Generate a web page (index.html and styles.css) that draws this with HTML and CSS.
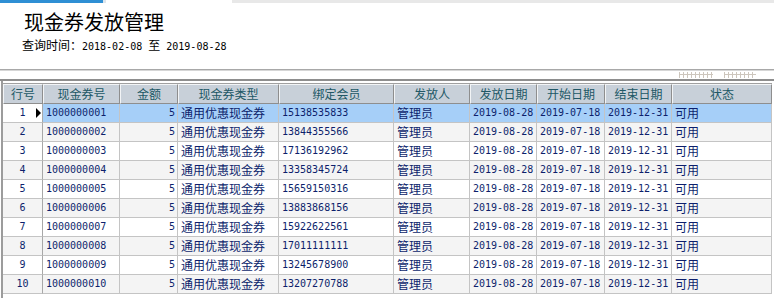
FILE: index.html
```html
<!DOCTYPE html>
<html lang="zh-CN">
<head>
<meta charset="utf-8">
<title>现金券发放管理</title>
<link rel="stylesheet" href="styles.css">
</head>
<body>
<div class="tabs"><span class="tab-active"></span><span class="tab-edge"></span><span class="tab-blank"></span><span class="tab-rest"></span></div>
<header class="head">
  <h1 class="title">现金券发放管理</h1>
  <p class="query">查询时间：<span class="mono">2018-02-08 </span>至<span class="mono"> 2019-08-28</span></p>
</header>
<div class="toolbar"><span class="grip"></span><span class="grip short"></span></div>
<div class="grid">
  <div class="row hdr">
    <div class="cell">行号</div><div class="cell">现金券号</div><div class="cell">金额</div><div class="cell">现金券类型</div><div class="cell">绑定会员</div><div class="cell">发放人</div><div class="cell">发放日期</div><div class="cell">开始日期</div><div class="cell">结束日期</div><div class="cell">状态</div>
  </div>
  <div class="row sel"><div class="cell rn mono cur">1</div><div class="cell mono">1000000001</div><div class="cell mono r">5</div><div class="cell">通用优惠现金券</div><div class="cell mono">15138535833</div><div class="cell">管理员</div><div class="cell mono">2019-08-28</div><div class="cell mono">2019-07-18</div><div class="cell mono">2019-12-31</div><div class="cell">可用</div></div>
  <div class="row alt"><div class="cell rn mono">2</div><div class="cell mono">1000000002</div><div class="cell mono r">5</div><div class="cell">通用优惠现金券</div><div class="cell mono">13844355566</div><div class="cell">管理员</div><div class="cell mono">2019-08-28</div><div class="cell mono">2019-07-18</div><div class="cell mono">2019-12-31</div><div class="cell">可用</div></div>
  <div class="row"><div class="cell rn mono">3</div><div class="cell mono">1000000003</div><div class="cell mono r">5</div><div class="cell">通用优惠现金券</div><div class="cell mono">17136192962</div><div class="cell">管理员</div><div class="cell mono">2019-08-28</div><div class="cell mono">2019-07-18</div><div class="cell mono">2019-12-31</div><div class="cell">可用</div></div>
  <div class="row alt"><div class="cell rn mono">4</div><div class="cell mono">1000000004</div><div class="cell mono r">5</div><div class="cell">通用优惠现金券</div><div class="cell mono">13358345724</div><div class="cell">管理员</div><div class="cell mono">2019-08-28</div><div class="cell mono">2019-07-18</div><div class="cell mono">2019-12-31</div><div class="cell">可用</div></div>
  <div class="row"><div class="cell rn mono">5</div><div class="cell mono">1000000005</div><div class="cell mono r">5</div><div class="cell">通用优惠现金券</div><div class="cell mono">15659150316</div><div class="cell">管理员</div><div class="cell mono">2019-08-28</div><div class="cell mono">2019-07-18</div><div class="cell mono">2019-12-31</div><div class="cell">可用</div></div>
  <div class="row alt"><div class="cell rn mono">6</div><div class="cell mono">1000000006</div><div class="cell mono r">5</div><div class="cell">通用优惠现金券</div><div class="cell mono">13883868156</div><div class="cell">管理员</div><div class="cell mono">2019-08-28</div><div class="cell mono">2019-07-18</div><div class="cell mono">2019-12-31</div><div class="cell">可用</div></div>
  <div class="row"><div class="cell rn mono">7</div><div class="cell mono">1000000007</div><div class="cell mono r">5</div><div class="cell">通用优惠现金券</div><div class="cell mono">15922622561</div><div class="cell">管理员</div><div class="cell mono">2019-08-28</div><div class="cell mono">2019-07-18</div><div class="cell mono">2019-12-31</div><div class="cell">可用</div></div>
  <div class="row alt"><div class="cell rn mono">8</div><div class="cell mono">1000000008</div><div class="cell mono r">5</div><div class="cell">通用优惠现金券</div><div class="cell mono">17011111111</div><div class="cell">管理员</div><div class="cell mono">2019-08-28</div><div class="cell mono">2019-07-18</div><div class="cell mono">2019-12-31</div><div class="cell">可用</div></div>
  <div class="row"><div class="cell rn mono">9</div><div class="cell mono">1000000009</div><div class="cell mono r">5</div><div class="cell">通用优惠现金券</div><div class="cell mono">13245678900</div><div class="cell">管理员</div><div class="cell mono">2019-08-28</div><div class="cell mono">2019-07-18</div><div class="cell mono">2019-12-31</div><div class="cell">可用</div></div>
  <div class="row alt"><div class="cell rn mono">10</div><div class="cell mono">1000000010</div><div class="cell mono r">5</div><div class="cell">通用优惠现金券</div><div class="cell mono">13207270788</div><div class="cell">管理员</div><div class="cell mono">2019-08-28</div><div class="cell mono">2019-07-18</div><div class="cell mono">2019-12-31</div><div class="cell">可用</div></div>
</div>
</body>
</html>
```
FILE: styles.css
```css
html, body {
  margin: 0;
  padding: 0;
  background: #fff;
}
body {
  width: 774px;
  height: 298px;
  overflow: hidden;
  font-family: "Noto Sans CJK SC", "Liberation Sans", sans-serif;
  font-size: 12px;
  color: #000;
}
.tabs {
  display: flex;
  height: 3px;
}
.tab-active { width: 103px; background: #2e8fd4; }
.tab-edge { width: 3px; background: #dde5ec; }
.tab-blank { width: 126px; background: #fff; }
.tab-rest { flex: 1; background: #e8e8e8; }

.head {
  height: 66px;
  box-sizing: border-box;
  padding-left: 22px;
}
.title {
  margin: 0;
  padding: 7px 0 0 2px;
  font-size: 20px;
  line-height: 24px;
  font-weight: 400;
}
.query {
  margin: 3px 0 0 0;
  line-height: 16px;
  font-size: 12px;
}
.mono {
  font-family: "DejaVu Sans Mono", "Liberation Mono", monospace;
  font-size: 10px;
  white-space: pre;
}

.toolbar {
  height: 9px;
  border-top: 1px solid #a8a8a8;
  box-shadow: inset 0 1px 0 #d6d6d6;
  border-bottom: 2px solid #8e8e8e;
  display: flex;
  justify-content: flex-end;
  align-items: center;
  gap: 11px;
  padding-right: 18px;
}
.grip {
  width: 34px;
  height: 6px;
  background:
    linear-gradient(#cdc6bd, #cdc6bd) 0 50% / 100% 1px no-repeat,
    repeating-linear-gradient(90deg, #cdc6bd 0 1px, transparent 1px 4px);
}
.grip.short { width: 32px; }

.grid {
  margin-left: 1px;
  border-left: 2px solid #9c9c9c;
  height: 217px;
  box-sizing: border-box;
  padding-top: 2px;
}
.row {
  display: grid;
  grid-template-columns: 40px 77px 58px 101px 115px 76px 67px 68px 67px 100px;
  height: 19px;
  width: 769px;
}
.cell {
  box-sizing: border-box;
  border-right: 1px solid #c4c4c4;
  border-bottom: 1px solid #c4c4c4;
  padding: 0 2px 0 3px;
  line-height: 18px;
  white-space: nowrap;
  overflow: hidden;
  color: #0d1f6c;
}
.cell.mono { font-size: 10px; }
.cell.r { text-align: right; }
.cell.rn {
  text-align: center;
  border-right: 1px solid #a8a8a8;
  position: relative;
  padding: 0;
}
.row.alt .cell { background: #f4f4f4; }
.row.sel .cell { background: #a6cff8; }
.row.sel .cell.rn { background: #fff; }
.cur::after {
  content: "";
  position: absolute;
  right: 1px;
  top: 4px;
  border-left: 5px solid #000;
  border-top: 5px solid transparent;
  border-bottom: 5px solid transparent;
}
.row.hdr {
  height: 20px;
  border-top: 1px solid #a0a0a0;
}
.row.hdr .cell {
  background: #c8d0d9;
  color: #215866;
  text-align: center;
  border: 1px solid;
  border-color: #f2f4f6 #8e8e8e #8e8e8e #f2f4f6;
  line-height: 17px;
  padding: 0;
}
```
